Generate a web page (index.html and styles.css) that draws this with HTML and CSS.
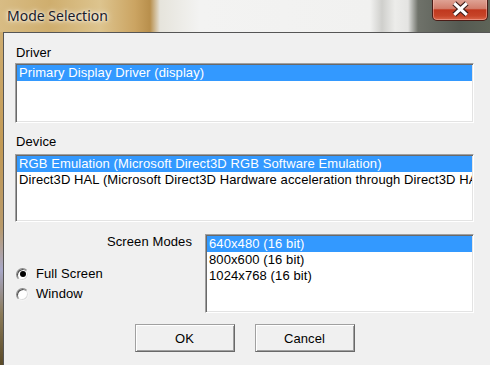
FILE: index.html
```html
<!DOCTYPE html>
<html lang="en">
<head>
  <meta charset="UTF-8">
  <title>Mode Selection</title>
  <link rel="stylesheet" href="styles.css">
</head>
<body>
  <div class="window">
    <!-- Title bar -->
    <div class="titlebar">
      <span class="title">Mode Selection</span>
      <button class="close-btn" aria-label="Close">
        <svg width="56" height="22" viewBox="0 0 56 22">
          <path d="M22 4 L35 16 M35 4 L22 16" stroke="#3b1c18" stroke-width="5.5" fill="none"/>
          <path d="M22 4 L35 16 M35 4 L22 16" stroke="#ffffff" stroke-width="3.2" fill="none"/>
        </svg>
      </button>
    </div>

    <!-- Dialog body -->
    <div class="client">
      <div class="label driver-label">Driver</div>
      <div class="listbox driver-list">
        <div class="item selected">Primary Display Driver (display)</div>
      </div>

      <div class="label device-label">Device</div>
      <div class="listbox device-list">
        <div class="item selected">RGB Emulation (Microsoft Direct3D RGB Software Emulation)</div>
        <div class="item">Direct3D HAL (Microsoft Direct3D Hardware acceleration through Direct3D HAL)</div>
      </div>

      <div class="modes">
        <div class="modes-left">
          <div class="label modes-label">Screen Modes</div>
          <div class="radios">
            <label class="radio-row"><span class="radio checked"></span>Full Screen</label>
            <label class="radio-row"><span class="radio"></span>Window</label>
          </div>
        </div>
        <div class="listbox modes-list">
          <div class="item selected">640x480 (16 bit)</div>
          <div class="item">800x600 (16 bit)</div>
          <div class="item">1024x768 (16 bit)</div>
        </div>
      </div>

      <div class="buttons">
        <button class="btn">OK</button>
        <button class="btn">Cancel</button>
      </div>
    </div>
  </div>
</body>
</html>
```

FILE: styles.css
```css
/* General */
body {
  margin: 0;
  width: 490px;
  height: 365px;
  overflow: hidden;
  font-family: "Liberation Sans", Arial, sans-serif;
  font-size: 13px;
  letter-spacing: 0.1px;
  color: #000;
  background: linear-gradient(to bottom, #d2b277 0%, #c39a55 40%, #b99a6a 62%, #a8a8c8 74%, #8a7a58 86%, #5a4a28 100%);
}

.window {
  display: flex;
  flex-direction: column;
  height: 365px;
}

/* Title bar (blurred glass) */
.titlebar {
  height: 32px;
  display: flex;
  justify-content: space-between;
  align-items: flex-start;
  background: linear-gradient(to right,
    #d8bc84 0px, #cfae6e 50px, #ddc48e 100px, #cba462 135px,
    #b88f4c 150px, #e6e4dc 160px, #f3f3f2 200px, #f1f1f0 370px,
    #cfcfcc 382px, #ececea 395px, #e4e4e2 408px, #6f726a 418px,
    #555a52 460px, #5e6458 490px);
}

.title {
  font-family: "Noto Sans", "Open Sans", sans-serif;
  font-size: 14px;
  letter-spacing: 0;
  line-height: 32px;
  padding-left: 7px;
  color: #1a1a28;
  text-shadow: 0 0 6px #fff, 0 0 3px #fff;
}

.close-btn {
  width: 56px;
  height: 22px;
  margin: -1px 2px 0 0;
  padding: 0;
  border: 1px solid #4a1c16;
  border-top: none;
  border-radius: 0 0 5px 5px;
  background: linear-gradient(to bottom, #e0a698 0%, #d27e6c 45%, #c0381e 52%, #c64428 80%, #d9664a 100%);
  box-shadow: inset 0 0 0 1px rgba(255, 200, 190, 0.45);
  display: flex;
  align-items: center;
  justify-content: center;
}

.close-btn svg {
  display: block;
}

/* Client area */
.client {
  flex: 1;
  margin-left: 3px;
  border-top: 1px solid #555;
  border-left: 1px solid #555;
  background: #f0f0f0;
  padding: 12px 16px 0 11px;
}

.label {
  line-height: 16px;
}

.driver-label {
  padding-left: 1px;
}

.device-label {
  margin-top: 11px;
  padding-left: 1px;
}

/* List boxes */
.listbox {
  box-sizing: border-box;
  background: #fff;
  border: 1px solid;
  border-color: #a0a0a0 #fff #fff #a0a0a0;
  box-shadow: inset 1px 1px 0 #696969, inset -1px -1px 0 #e3e3e3;
  padding: 1px;
  overflow: hidden;
}

.driver-list {
  margin-top: 2px;
  height: 60px;
}

.device-list {
  margin-top: 4px;
  height: 68px;
}

.item {
  height: 16px;
  line-height: 16px;
  padding-left: 2px;
  white-space: nowrap;
  overflow: hidden;
}

.item.selected {
  background: #3399ff;
  color: #fff;
}

/* Screen modes row */
.modes {
  margin-top: 12px;
  display: flex;
  gap: 13px;
}

.modes-left {
  width: 177px;
}

.modes-label {
  text-align: right;
}

.radios {
  margin-top: 14px;
  display: flex;
  flex-direction: column;
}

.radio-row {
  display: flex;
  align-items: center;
  gap: 7px;
  height: 20px;
  line-height: 20px;
  padding-left: 1px;
}

.radio {
  box-sizing: border-box;
  width: 13px;
  height: 13px;
  border-radius: 50%;
  background: #fff;
  border: 1px solid;
  border-color: #8a8a8a #f4f4f4 #f4f4f4 #8a8a8a;
  box-shadow: inset 1px 1px 0 #505050, inset -1px -1px 0 #dcdcdc;
  display: flex;
  align-items: center;
  justify-content: center;
}

.radio.checked::after {
  content: "";
  width: 6px;
  height: 6px;
  border-radius: 50%;
  background: #000;
}

.modes-list {
  width: 269px;
  height: 79px;
}

/* Buttons */
.buttons {
  margin-top: 11px;
  display: flex;
  justify-content: center;
  gap: 20px;
}

.btn {
  box-sizing: border-box;
  width: 100px;
  height: 28px;
  font-family: "Liberation Sans", Arial, sans-serif;
  font-size: 13px;
  letter-spacing: 0.1px;
  color: #000;
  background: #f0f0f0;
  border: 1px solid;
  border-color: #a0a0a0 #696969 #696969 #a0a0a0;
  box-shadow: inset 1px 1px 0 #fff, inset -1px -1px 0 #a0a0a0;
  padding: 0;
}
```
